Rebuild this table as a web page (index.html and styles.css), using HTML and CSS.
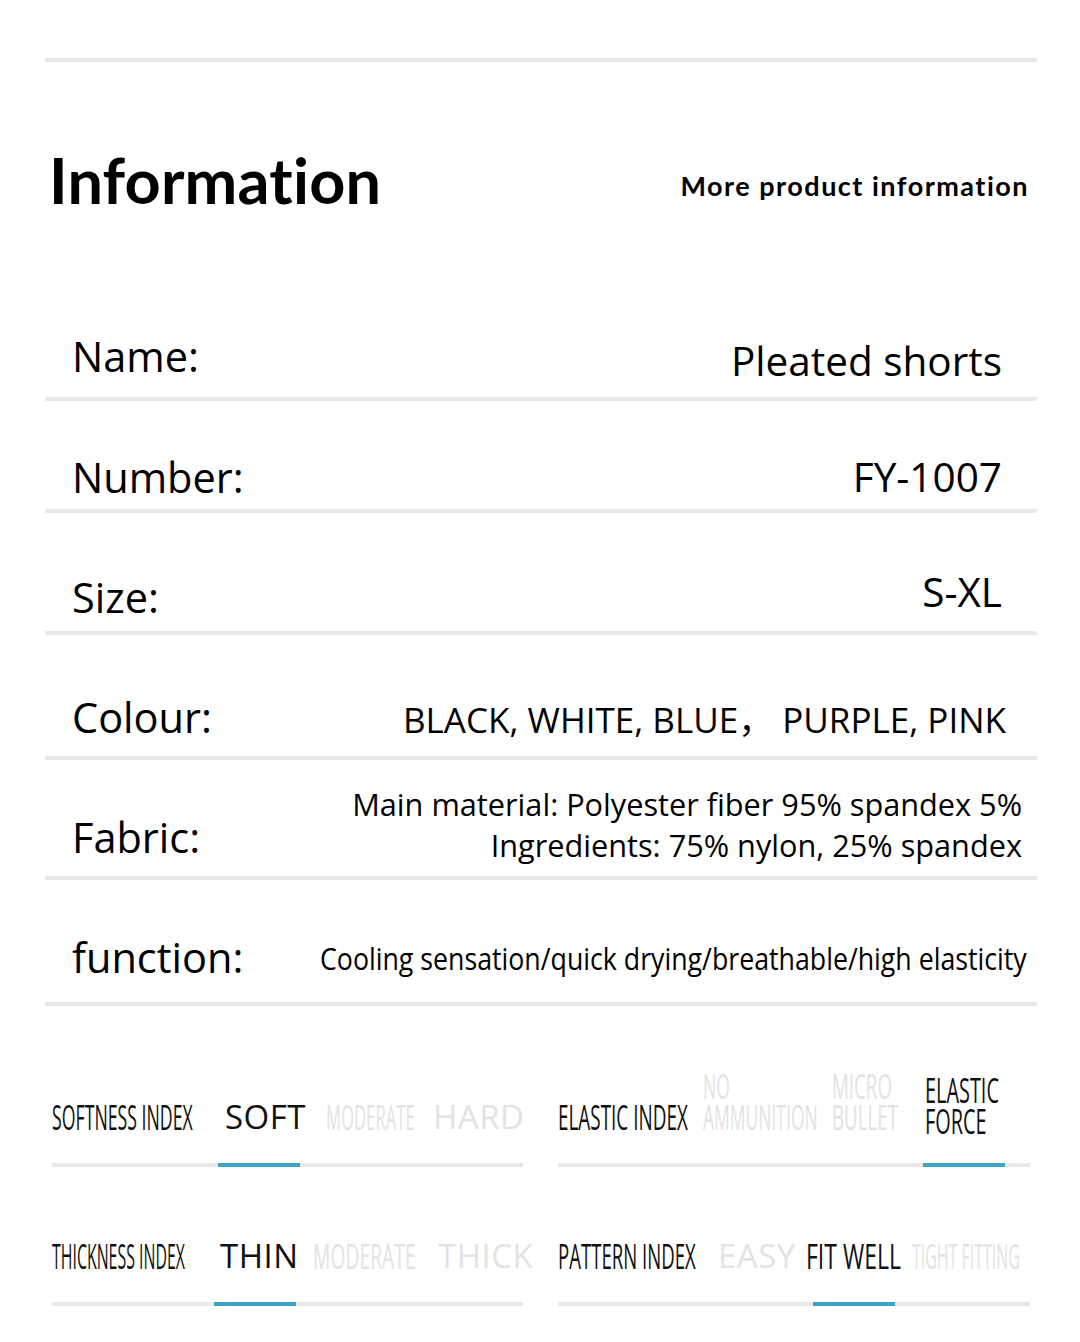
FILE: index.html
```html
<!DOCTYPE html>
<html lang="en">
<head>
<meta charset="utf-8">
<title>Information</title>
<link rel="stylesheet" href="styles.css">
</head>
<body>
<div class="page">
  <div class="rule"></div>
  <header class="head">
    <h1 class="title">Information</h1>
    <p class="more">More product information</p>
  </header>

  <div class="spec spec-name">
    <span class="lbl">Name:</span>
    <span class="val">Pleated shorts</span>
  </div>
  <div class="spec spec-number">
    <span class="lbl">Number:</span>
    <span class="val">FY-1007</span>
  </div>
  <div class="spec spec-size">
    <span class="lbl">Size:</span>
    <span class="val">S-XL</span>
  </div>
  <div class="spec spec-colour">
    <span class="lbl">Colour:</span>
    <span class="val">BLACK, WHITE, BLUE， PURPLE, PINK</span>
  </div>
  <div class="spec spec-fabric">
    <span class="lbl">Fabric:</span>
    <span class="val">Main material: Polyester fiber 95% spandex 5%<br>Ingredients: 75% nylon, 25% spandex</span>
  </div>
  <div class="spec spec-function">
    <span class="lbl">function:</span>
    <span class="val"><span class="squeeze">Cooling sensation/quick drying/breathable/high elasticity</span></span>
  </div>

  <section class="indexes">
    <div class="idx">
      <div class="idx-text idx-a">
        <span class="item"><span class="cond k-a1">SOFTNESS INDEX</span></span>
        <span class="item big">SOFT</span>
        <span class="item dim"><span class="cond k-a3">MODERATE</span></span>
        <span class="item big dim">HARD</span>
      </div>
      <div class="bar"><span class="fill fill-a"></span></div>
    </div>

    <div class="idx">
      <div class="idx-text idx-b">
        <span class="item"><span class="cond k-b1">ELASTIC INDEX</span></span>
        <span class="item dim stack"><span class="cond k-b2">NO</span><span class="cond k-b2">AMMUNITION</span></span>
        <span class="item dim stack"><span class="cond k-b3">MICRO</span><span class="cond k-b3">BULLET</span></span>
        <span class="item low stack"><span class="cond k-b4">ELASTIC</span><span class="cond k-b4">FORCE</span></span>
      </div>
      <div class="bar"><span class="fill fill-b"></span></div>
    </div>

    <div class="idx">
      <div class="idx-text idx-c">
        <span class="item"><span class="cond k-c1">THICKNESS INDEX</span></span>
        <span class="item big">THIN</span>
        <span class="item dim"><span class="cond k-c3">MODERATE</span></span>
        <span class="item big dim">THICK</span>
      </div>
      <div class="bar"><span class="fill fill-c"></span></div>
    </div>

    <div class="idx">
      <div class="idx-text idx-d">
        <span class="item"><span class="cond k-d1">PATTERN INDEX</span></span>
        <span class="item big dim">EASY</span>
        <span class="item"><span class="cond k-d3">FIT WELL</span></span>
        <span class="item dim"><span class="cond k-d4">TIGHT FITTING</span></span>
      </div>
      <div class="bar"><span class="fill fill-d"></span></div>
    </div>
  </section>
</div>
</body>
</html>
```

FILE: styles.css
```css
* { box-sizing: border-box; }

html, body {
  margin: 0;
  padding: 0;
  background: #ffffff;
}

body {
  font-family: "Open Sans", "Noto Sans", "Noto Sans CJK SC", sans-serif;
  color: #000;
}

.page {
  width: 1080px;
  height: 1342px;
  padding: 58px 43px 0 45px;
  overflow: hidden;
}

.rule {
  height: 4px;
  background: #e8e8e8;
}

/* header */
.head {
  height: 220px;
  padding-top: 86px;
  display: flex;
  justify-content: space-between;
  align-items: flex-start;
}

.title {
  margin: 0 0 0 4px;
  font-family: "Lato", "Open Sans", sans-serif;
  font-weight: 700;
  font-size: 63px;
  line-height: 1;
  letter-spacing: 0.2px;
  font-variant-ligatures: none;
  font-feature-settings: "liga" 0;
}

.more {
  margin: 24px 8px 0 0;
  font-family: "Lato", "Open Sans", sans-serif;
  font-weight: 700;
  font-size: 27px;
  line-height: 1;
  letter-spacing: 1.5px;
  font-variant-ligatures: none;
  font-feature-settings: "liga" 0;
}

/* spec rows */
.spec {
  display: flex;
  justify-content: space-between;
  align-items: flex-end;
  border-bottom: 4px solid #e8e8e8;
}

.lbl {
  margin-left: 27px;
  font-size: 41.5px;
  line-height: 1;
  white-space: nowrap;
}

.val {
  font-size: 40.5px;
  line-height: 1;
  text-align: right;
  white-space: nowrap;
  margin-right: 35px;
}

.spec-name { height: 119px; }
.spec-name .lbl { margin-bottom: 20px; }
.spec-name .val { margin-bottom: 16px; }

.spec-number { height: 112px; }
.spec-number .lbl { margin-bottom: 11px; }
.spec-number .val { margin-bottom: 12px; }

.spec-size { height: 122px; }
.spec-size .lbl { margin-bottom: 13px; }
.spec-size .val { margin-bottom: 19px; }

.spec-colour { height: 125px; }
.spec-colour .lbl { margin-bottom: 18px; }
.spec-colour .val {
  font-size: 35px;
  margin-right: 31px;
  margin-bottom: 19px;
}

.spec-fabric { height: 120px; }
.spec-fabric .lbl { margin-bottom: 18px; }
.spec-fabric .val {
  font-size: 30.7px;
  line-height: 41px;
  margin-right: 15px;
  margin-bottom: 10px;
}

.spec-function { height: 126px; }
.spec-function .lbl { margin-bottom: 24px; }
.spec-function .val {
  width: 706px;
  text-align: left;
  font-size: 31px;
  margin-right: 11px;
  margin-bottom: 28px;
}

.squeeze {
  display: inline-block;
  transform: scaleX(0.862);
  transform-origin: left bottom;
}

/* index section */
.indexes {
  padding: 64px 0 0 7px;
  display: grid;
  grid-template-columns: 471px 472px;
  column-gap: 35px;
  row-gap: 42px;
}

.idx {
  display: flex;
  flex-direction: column;
}

.idx-text {
  height: 62px;
  display: grid;
  align-items: end;
}

.idx-a { grid-template-columns: 173px 101px 107px 1fr; }
.idx-b { grid-template-columns: 145px 129px 93px 1fr; }
.idx-c { grid-template-columns: 168px 93px 125px 1fr; }
.idx-d { grid-template-columns: 160px 88px 106px 1fr; }

.item {
  font-size: 35px;
  line-height: 31px;
  white-space: nowrap;
  color: #111;
}

.item.stack {
  display: flex;
  flex-direction: column;
  align-items: flex-start;
}

.item.big {
  font-size: 33px;
  letter-spacing: 0.5px;
}

.item.dim { color: #e3e3e3; }

.item.low { margin-bottom: -4px; }

.cond {
  display: inline-block;
  transform-origin: left bottom;
  transform: scaleX(var(--k, 0.5));
}

.k-a1 { --k: 0.506; }
.k-a3 { --k: 0.477; }
.k-b1 { --k: 0.54; }
.k-b2 { --k: 0.5; }
.k-b3 { --k: 0.535; }
.k-b4 { --k: 0.568; }
.k-c1 { --k: 0.454; }
.k-c3 { --k: 0.552; }
.k-d1 { --k: 0.531; }
.k-d3 { --k: 0.657; }
.k-d4 { --k: 0.456; }

.bar {
  position: relative;
  height: 4px;
  margin-top: 31px;
  background: #e8e8e8;
}

.fill {
  position: absolute;
  top: 0;
  height: 4px;
  width: 82px;
  background: #3fa3c4;
}

.fill-a { left: 166px; }
.fill-b { left: 365px; }
.fill-c { left: 162px; }
.fill-d { left: 255px; }
```
